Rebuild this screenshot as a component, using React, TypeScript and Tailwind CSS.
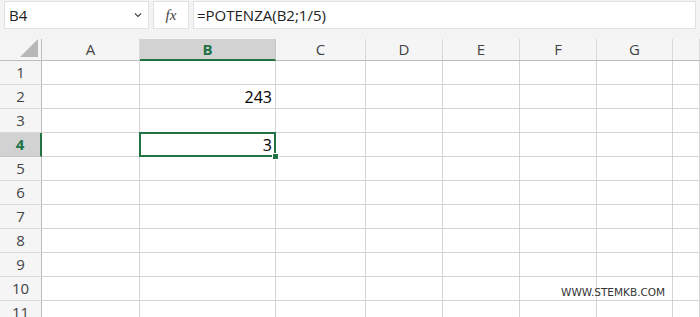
const cols = [
  { label: "A", w: "w-[98px]" },
  { label: "B", w: "w-[136px]" },
  { label: "C", w: "w-[90px]" },
  { label: "D", w: "w-[77px]" },
  { label: "E", w: "w-[77px]" },
  { label: "F", w: "w-[77px]" },
  { label: "G", w: "w-[76px]" },
  { label: "", w: "w-[27px]" },
];

const rows = [1, 2, 3, 4, 5, 6, 7, 8, 9, 10, 11];

function Cell({ col, row }: { col: string; row: number }) {
  if (col === "B" && row === 2) {
    return <span className="pr-[3px] text-[16px] text-black">243</span>;
  }
  if (col === "B" && row === 4) {
    return (
      <>
        <span className="pr-[3px] text-[16px] text-black">3</span>
        <div className="pointer-events-none absolute -left-px -top-px right-[-1px] bottom-[-1px] z-10 border-2 border-[#217346]" />
        <div className="absolute right-[-4px] bottom-[-4px] z-20 h-[7px] w-[7px] border border-white bg-[#217346]" />
      </>
    );
  }
  return null;
}

export default function App() {
  return (
    <div className="relative h-[317px] w-[700px] overflow-hidden bg-white" style={{ fontFamily: "'Open Sans', 'Noto Sans', sans-serif" }}>
      {/* formula bar */}
      <div className="flex h-[39px] gap-[4px] bg-[#f3f3f3] px-[4px] pt-[1px]">
        <div className="flex h-[28px] w-[145px] items-center justify-between border border-[#e1e1e1] bg-white pl-[4px] pr-[4px] text-[15px] text-[#222]">
          <span>B4</span>
          <svg width="10" height="10" viewBox="0 0 10 10" className="mr-[1px]">
            <path d="M2 3.5 L5 6.5 L8 3.5" fill="none" stroke="#444" strokeWidth="1.1" />
          </svg>
        </div>
        <div className="flex h-[28px] w-[36px] items-center justify-center border border-[#e1e1e1] bg-white text-[15px] italic text-[#444]" style={{ fontFamily: "'Liberation Serif', serif" }}>
          fx
        </div>
        <div className="flex h-[28px] flex-1 items-center border border-[#e1e1e1] bg-white pl-[3px] text-[15px] text-[#222]">
          =POTENZA(B2;1/5)
        </div>
      </div>

      {/* column headers */}
      <div className="flex h-[22px] border-b border-[#bdbdbd] bg-[#f5f5f5]">
        <div className="relative w-[42px] border-r border-[#bdbdbd]">
          <svg width="18" height="18" viewBox="0 0 18 18" className="absolute right-[3px] bottom-[3px]">
            <path d="M18 0 L18 18 L0 18 Z" fill="#b8b8b8" />
          </svg>
        </div>
        {cols.map((c) =>
          c.label === "B" ? (
            <div key="B" className={`${c.w} -mb-px flex items-center justify-center border-r border-b-2 border-[#c6c6c6] border-b-[#217346] bg-[#d2d2d2] text-[15px] font-bold text-[#217346]`}>
              B
            </div>
          ) : (
            <div key={c.w + c.label} className={`${c.w} flex items-center justify-center border-r border-[#d8d8d8] text-[15px] text-[#444]`}>
              {c.label}
            </div>
          )
        )}
      </div>

      {/* grid */}
      {rows.map((r) => (
        <div key={r} className="flex h-[24px]">
          {r === 4 ? (
            <div className="flex w-[42px] items-center justify-center border-r-2 border-b border-r-[#217346] border-b-[#c6c6c6] bg-[#d2d2d2] text-[15px] font-bold text-[#217346]">
              4
            </div>
          ) : (
            <div className="flex w-[42px] items-center justify-center border-r border-b border-r-[#bdbdbd] border-b-[#d8d8d8] bg-[#f5f5f5] text-[15px] text-[#444]">
              {r}
            </div>
          )}
          {cols.map((c) => (
            <div key={c.w + c.label} className={`${c.w} relative flex items-center justify-end border-r border-b border-[#d4d4d4]`}>
              <Cell col={c.label} row={r} />
            </div>
          ))}
        </div>
      ))}

      <div className="pointer-events-none absolute left-[561px] top-[285px] text-[10.5px] text-[#333]" style={{ fontFamily: "'DejaVu Sans', Verdana, sans-serif" }}>
        WWW.STEMKB.COM
      </div>
    </div>
  );
}
